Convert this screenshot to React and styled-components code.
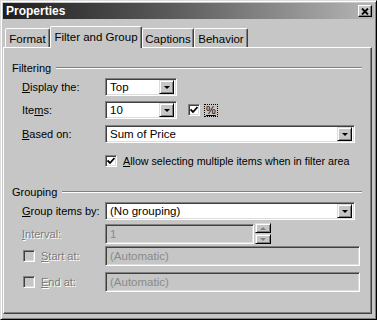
import React from 'react'
import styled, { createGlobalStyle } from 'styled-components'

const Global = createGlobalStyle`
  html, body { margin: 0; padding: 0; background: #c6c6c6; }
  body { font-family: "Liberation Sans", Arial, sans-serif; font-size: 11px; color: #000; }
`;

const Window = styled.div`
  width: 377px;
  height: 320px;
  box-sizing: border-box;
  background: #c6c6c6;
  border: 1px solid;
  border-color: #dcdcdc #000 #000 #dcdcdc;
  box-shadow: inset 1px 1px #fff, inset -1px -1px #808080;
  padding: 2px;
  display: flex;
  flex-direction: column;
`;

const TitleBar = styled.div`
  height: 16px;
  background: linear-gradient(to right, #1e1e1e, #5a5a5a 45%, #b6b6b6);
  color: #fff;
  font-weight: bold;
  font-size: 12px;
  display: flex;
  align-items: center;
  justify-content: space-between;
  padding: 0 2px 0 3px;
`;

const CloseBtn = styled.div`
  width: 12px;
  height: 10px;
  background: #c6c6c6;
  border: 1px solid;
  border-color: #fff #000 #000 #fff;
  box-shadow: inset -1px -1px #808080;
  display: flex;
  align-items: center;
  justify-content: center;
`;

const TabStrip = styled.div`
  display: flex;
  align-items: flex-end;
  margin-top: 7px;
  padding-left: 2px;
  height: 21px;
  position: relative;
  z-index: 1;
`;

const Tab = styled.div`
  box-sizing: border-box;
  width: ${p => p.w}px;
  height: ${p => (p.active ? 22 : 19)}px;
  margin-bottom: ${p => (p.active ? -1 : 0)}px;
  background: #c6c6c6;
  border: 1px solid;
  border-bottom: none;
  border-color: #fff #404040 transparent #fff;
  box-shadow: inset -1px 0 #808080;
  border-radius: 2px 2px 0 0;
  display: flex;
  align-items: ${p => (p.active ? 'flex-start' : 'center')};
  padding-top: ${p => (p.active ? 4 : 1)}px;
  justify-content: center;
  font-size: 11.5px;
`;

const Panel = styled.div`
  flex: 1;
  margin: 0 2px 3px 0;
  border: 1px solid;
  border-color: #fff #404040 #404040 #fff;
  box-shadow: inset -1px -1px #808080;
  padding: 14px 9px 0 8px;
  display: flex;
  flex-direction: column;
`;

const Header = styled.div`
  display: flex;
  align-items: center;
  gap: 5px;
  height: 12px;
  margin-top: ${p => p.mt || 0}px;
  font-size: 11px;
`;

const Groove = styled.div`
  flex: 1;
  border-top: 1px solid #808080;
  border-bottom: 1px solid #fff;
`;

const Row = styled.div`
  display: flex;
  align-items: center;
  height: ${p => p.h}px;
  margin-top: ${p => p.mt}px;
`;

const Label = styled.div`
  width: ${p => p.w || 83}px;
  flex-shrink: 0;
  margin-left: ${p => p.ml ?? 10}px;
  color: ${p => (p.disabled ? '#7a7a7a' : '#000')};
  text-shadow: ${p => (p.disabled ? '1px 1px #fff' : 'none')};
  white-space: nowrap;
`;

const Field = styled.div`
  box-sizing: border-box;
  width: ${p => p.w}px;
  height: ${p => p.h || 18}px;
  flex-shrink: 0;
  background: ${p => (p.disabled ? '#c6c6c6' : '#fff')};
  border: 1px solid;
  border-color: #808080 #fff #fff #808080;
  box-shadow: inset 1px 1px #404040, inset -1px -1px #dcdcdc;
  display: flex;
  align-items: center;
  padding: 0 2px 0 4px;
  color: ${p => (p.disabled ? '#8a8a8a' : '#000')};
  font-size: 11.5px;
`;

const FieldText = styled.span`
  flex: 1;
  white-space: nowrap;
`;

const DropBtn = styled.div`
  box-sizing: border-box;
  width: 15px;
  height: 14px;
  background: #c6c6c6;
  border: 1px solid;
  border-color: #dcdcdc #000 #000 #dcdcdc;
  box-shadow: inset 1px 1px #fff, inset -1px -1px #808080;
  display: flex;
  align-items: center;
  justify-content: center;
`;

const Arrow = styled.div`
  width: 0;
  height: 0;
  border-left: 3px solid transparent;
  border-right: 3px solid transparent;
  border-${p => (p.up ? 'bottom' : 'top')}: 3px solid ${p => (p.disabled ? '#808080' : '#000')};
`;

const Spin = styled.div`
  display: flex;
  flex-direction: column;
  margin-left: 1px;
  gap: 1px;
`;

const SpinBtn = styled(DropBtn)`
  width: 16px;
  height: 10px;
`;

const Check = styled.div`
  box-sizing: border-box;
  width: 12px;
  height: 12px;
  background: ${p => (p.disabled ? '#c6c6c6' : '#fff')};
  border: 1px solid;
  border-color: #808080 #fff #fff #808080;
  box-shadow: inset 1px 1px #404040, inset -1px -1px #dcdcdc;
  margin-left: ${p => p.ml || 0}px;
  display: flex;
  align-items: center;
  justify-content: center;
  flex-shrink: 0;
`;

const Focus = styled.span`
  margin-left: 5px;
  padding: 0 1px;
  outline: 1px dotted #000;
  line-height: 11px;
`;

const CheckLabel = styled.span`
  margin-left: 6px;
  font-size: 10.7px;
  white-space: nowrap;
`;

const Tick = () => (
  <svg width="8" height="8" viewBox="0 0 8 8">
    <path d="M0.5 3.5 L3 6 L7.5 1" stroke="#000" strokeWidth="1.8" fill="none" />
  </svg>
);

const Combo = ({ w, value }) => (
  <Field w={w}>
    <FieldText>{value}</FieldText>
    <DropBtn><Arrow /></DropBtn>
  </Field>
);

export default function App() {
  return (
    <>
      <Global />
      <Window>
        <TitleBar>
          <span>Properties</span>
          <CloseBtn>
            <svg width="8" height="7" viewBox="0 0 8 7">
              <path d="M1 0.5 L7 6.5 M7 0.5 L1 6.5" stroke="#000" strokeWidth="1.8" />
            </svg>
          </CloseBtn>
        </TitleBar>
        <TabStrip>
          <Tab w={45}>Format</Tab>
          <Tab w={92} active>Filter and Group</Tab>
          <Tab w={52}>Captions</Tab>
          <Tab w={54}>Behavior</Tab>
        </TabStrip>
        <Panel>
          <Header>Filtering<Groove /></Header>
          <Row h={18} mt={4}>
            <Label><u>D</u>isplay the:</Label>
            <Combo w={72} value="Top" />
          </Row>
          <Row h={18} mt={5}>
            <Label>Ite<u>m</u>s:</Label>
            <Combo w={72} value="10" />
            <Check ml={11}><Tick /></Check>
            <Focus><u>%</u></Focus>
          </Row>
          <Row h={18} mt={6}>
            <Label><u>B</u>ased on:</Label>
            <Combo w={250} value="Sum of Price" />
          </Row>
          <Row h={12} mt={12}>
            <Label />
            <Check><Tick /></Check>
            <CheckLabel><u>A</u>llow selecting multiple items when in filter area</CheckLabel>
          </Row>
          <Header mt={19}>Grouping<Groove /></Header>
          <Row h={18} mt={4}>
            <Label><u>G</u>roup items by:</Label>
            <Combo w={250} value="(No grouping)" />
          </Row>
          <Row h={21} mt={3}>
            <Label disabled><u>I</u>nterval:</Label>
            <Field w={149} h={20} disabled><FieldText>1</FieldText></Field>
            <Spin>
              <SpinBtn><Arrow up disabled /></SpinBtn>
              <SpinBtn><Arrow disabled /></SpinBtn>
            </Spin>
          </Row>
          <Row h={20} mt={2}>
            <Check disabled ml={11} />
            <Label disabled ml={6} w={64}><u>S</u>tart at:</Label>
            <Field w={255} h={20} disabled><FieldText>(Automatic)</FieldText></Field>
          </Row>
          <Row h={20} mt={6}>
            <Check disabled ml={11} />
            <Label disabled ml={6} w={64}><u>E</u>nd at:</Label>
            <Field w={255} h={20} disabled><FieldText>(Automatic)</FieldText></Field>
          </Row>
        </Panel>
      </Window>
    </>
  )
}
